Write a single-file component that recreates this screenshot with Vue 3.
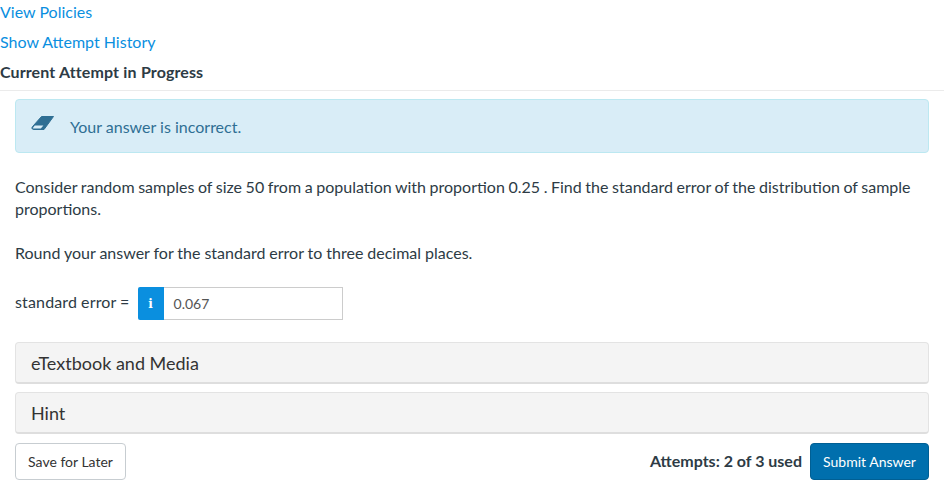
<template>
  <div class="page">
    <div class="links">
      <a class="link">View Policies</a>
      <a class="link">Show Attempt History</a>
      <div class="current">Current Attempt in Progress</div>
    </div>
    <div class="content">
      <div class="alert">
        <svg class="eraser" width="24" height="16" viewBox="0 0 24 16">
          <path d="M10.5 1.5H22.5L13 14.5H2.8C1 14.5 .4 13 1.4 11.8Z" fill="#2f6f94" stroke="#2f6f94" stroke-linejoin="round" />
          <path d="M3.8 10.5H12.4L9.8 13.6H2.6C2 13.6 1.8 13 2.2 12.4Z" fill="#d9edf7" />
        </svg>
        <span>Your answer is incorrect.</span>
      </div>
      <p class="question">Consider random samples of size 50 from a population with proportion 0.25 . Find the standard error of the distribution of sample proportions.</p>
      <p class="round">Round your answer for the standard error to three decimal places.</p>
      <div class="answer">
        <span class="label">standard error =</span>
        <span class="info">i</span>
        <span class="field">0.067</span>
      </div>
      <div class="panel first">eTextbook and Media</div>
      <div class="panel">Hint</div>
      <div class="actions">
        <button class="save">Save for Later</button>
        <div class="right">
          <span class="attempts">Attempts: 2 of 3 used</span>
          <button class="submit">Submit Answer</button>
        </div>
      </div>
    </div>
  </div>
</template>

<script setup>
</script>

<style>
body {
  background: #fff;
}
</style>

<style scoped>
.page {
  width: 944px;
  height: 497px;
  overflow: hidden;
  font-family: Lato, "Open Sans", sans-serif;
  font-size: 16px;
  color: #2d3b45;
}
.links {
  border-bottom: 1px solid #ebebeb;
  height: 91px;
  box-sizing: border-box;
}
.link,
.current {
  display: block;
  height: 30px;
  line-height: 24px;
}
.link {
  color: #0a8fdf;
}
.current {
  font-weight: 700;
  letter-spacing: 0.1px;
  word-spacing: 0.3px;
}
.content {
  padding: 8px 15px 0;
}
.alert {
  height: 54px;
  box-sizing: border-box;
  display: flex;
  align-items: center;
  padding-left: 15px;
  gap: 15px;
  background: #d9edf7;
  border: 1px solid #bce8f1;
  border-radius: 4px;
  color: #2f6f94;
}
.eraser {
  flex: none;
  margin-top: -6px;
}
.question {
  margin: 23px 0 0;
  line-height: 22px;
  word-spacing: -0.5px;
}
.round {
  margin: 22px 0 0;
  line-height: 22px;
  word-spacing: -0.15px;
}
.answer {
  display: flex;
  align-items: center;
  margin-top: 23px;
  height: 33px;
}
.label {
  margin-right: 8px;
  margin-top: -4px;
  letter-spacing: 0.15px;
  word-spacing: -0.3px;
}
.info {
  width: 26px;
  height: 33px;
  background: #0a8fdf;
  color: #fff;
  border-radius: 2px 0 0 2px;
  font-family: "DejaVu Serif", serif;
  font-weight: 700;
  font-size: 12px;
  display: flex;
  align-items: center;
  justify-content: center;
}
.field {
  width: 179px;
  height: 33px;
  box-sizing: border-box;
  border: 1px solid #ccc;
  border-left: none;
  padding-left: 10px;
  font-size: 14px;
  line-height: 31px;
  color: #555;
}
.panel {
  height: 42px;
  box-sizing: border-box;
  margin-top: 8px;
  padding-left: 15px;
  background: #f4f4f4;
  border: 1px solid #e3e3e3;
  border-bottom: 2px solid #dedede;
  border-radius: 4px;
  font-size: 18px;
  line-height: 40px;
  color: #333;
}
.panel.first {
  margin-top: 22px;
}
.actions {
  display: flex;
  justify-content: space-between;
  margin-top: 9px;
}
.right {
  display: flex;
  align-items: center;
  gap: 8px;
}
.attempts {
  font-weight: 700;
  margin-top: -2px;
}
button {
  height: 37px;
  border-radius: 4px;
  font-family: Lato, "Open Sans", sans-serif;
  font-size: 14px;
  padding: 0;
}
.save {
  width: 111px;
  background: #fff;
  border: 1px solid #c7cdd1;
  color: #333;
}
.submit {
  width: 119px;
  background: #006fad;
  border: 1px solid #005f94;
  color: #fff;
}
</style>
